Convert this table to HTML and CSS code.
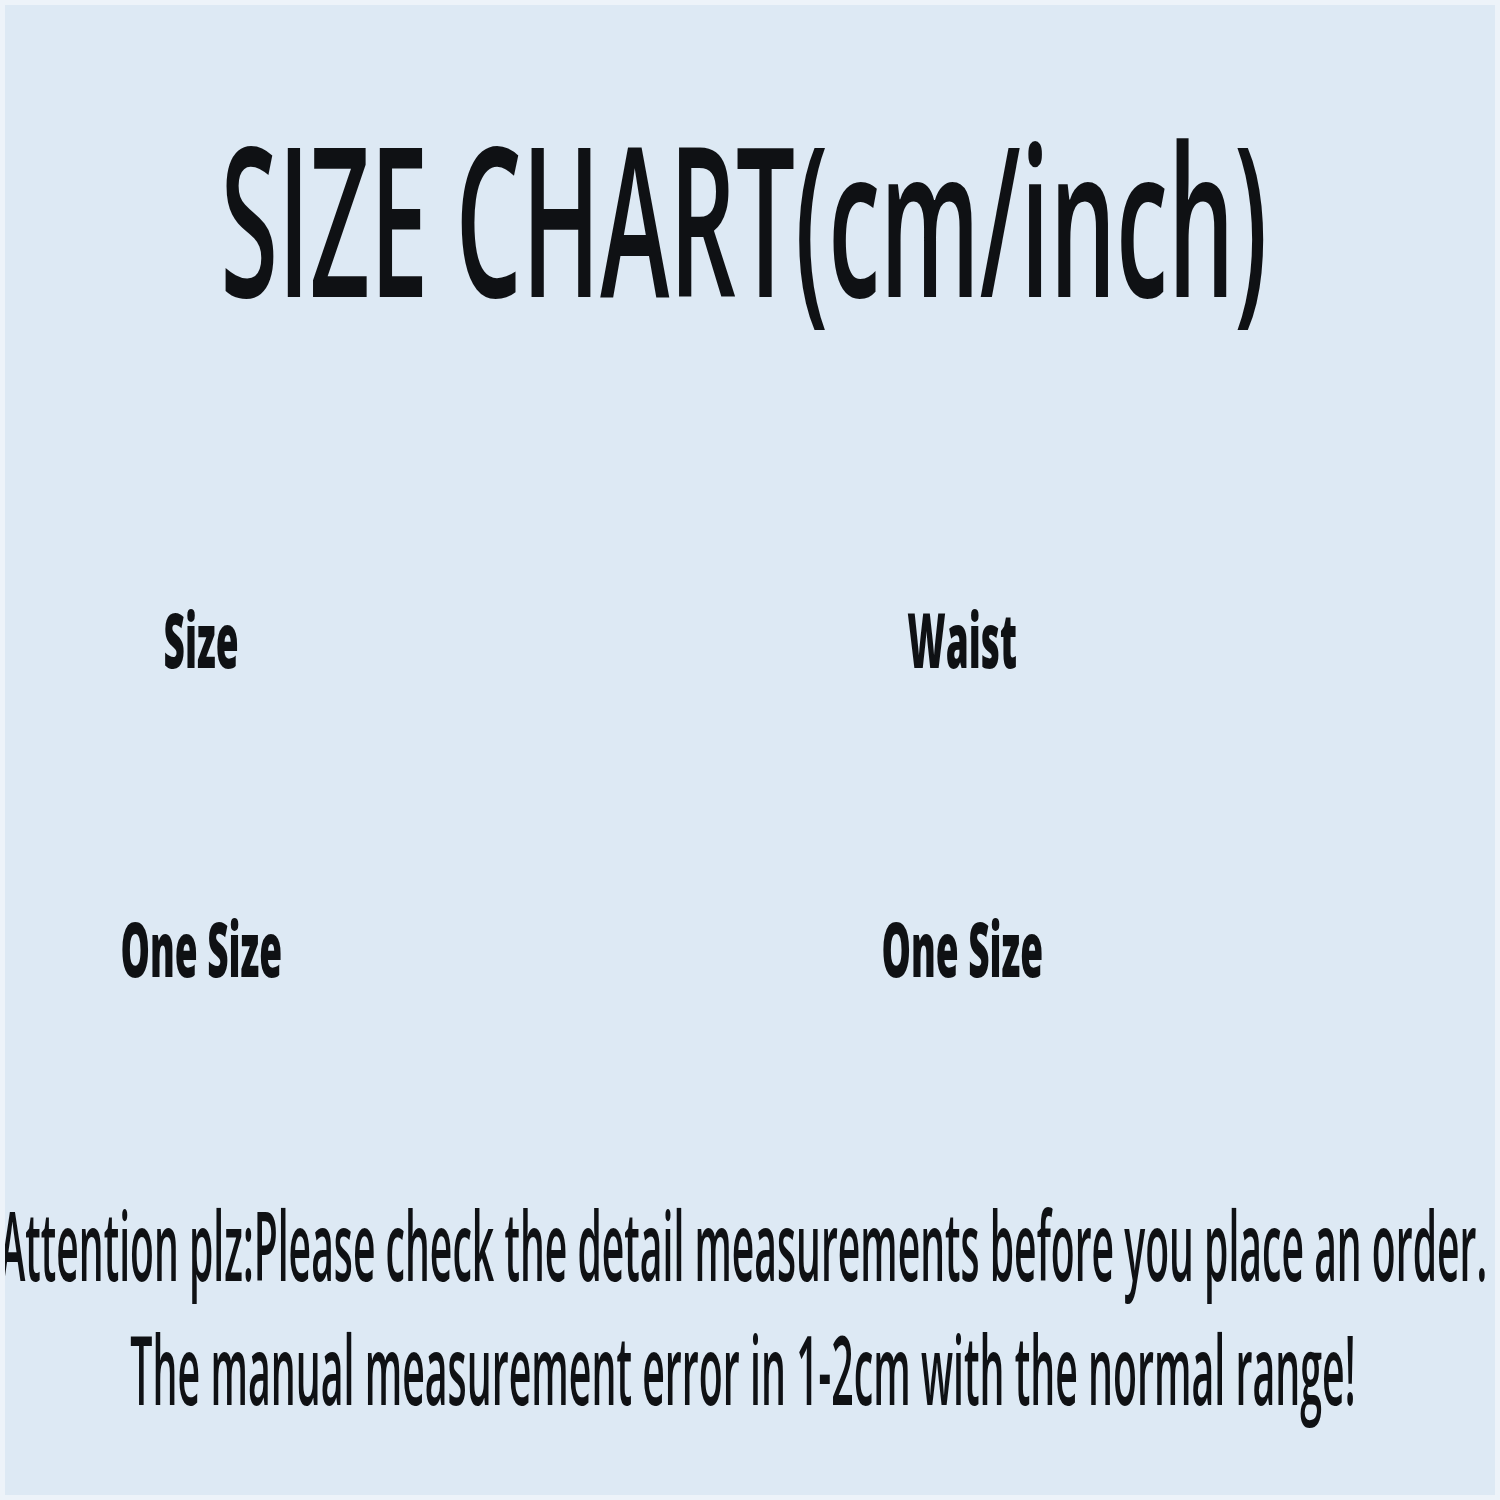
FILE: index.html
```html
<!DOCTYPE html>
<html lang="en">
<head>
<meta charset="utf-8">
<title>Size Chart</title>
<link rel="stylesheet" href="styles.css">
</head>
<body>
<main class="page">
  <header class="title-row">
    <h1 class="title"><span class="squeeze squeeze-title">SIZE CHART(cm/inch)</span></h1>
  </header>
  <section class="chart">
    <div class="cell head"><span class="squeeze squeeze-cell">Size</span></div>
    <div class="cell head"><span class="squeeze squeeze-cell">Waist</span></div>
    <div class="cell value"><span class="squeeze squeeze-cell">One Size</span></div>
    <div class="cell value"><span class="squeeze squeeze-cell">One Size</span></div>
  </section>
  <footer class="notes">
    <p class="note"><span class="squeeze squeeze-note1">Attention plz:Please check the detail measurements before you place an order.</span></p>
    <p class="note"><span class="squeeze squeeze-note2">The manual measurement error in 1-2cm with the normal range!</span></p>
  </footer>
</main>
</body>
</html>
```

FILE: styles.css
```css
html, body {
  margin: 0;
  padding: 0;
  background: #dde9f4;
}

.page {
  box-sizing: border-box;
  width: 1500px;
  height: 1500px;
  border: 5px solid #edf3f9;
  background: #dde9f4;
  overflow: hidden;
  color: #0f1114;
  font-family: "Open Sans", "Noto Sans", sans-serif;
}

.squeeze {
  display: inline-block;
  white-space: nowrap;
  transform-origin: 50% 50%;
  flex: none;
}

.title-row {
  margin-top: 107px;
  display: flex;
  justify-content: center;
  padding-right: 12px;
}

.title {
  margin: 0;
  display: flex;
  justify-content: center;
  font-size: 209px;
  line-height: 209px;
  font-weight: 600;
  width: 100%;
}

.squeeze-title {
  transform: scaleX(0.5);
}

.chart {
  margin-top: 279px;
  display: grid;
  grid-template-columns: 392px 402px;
  column-gap: 364px;
  row-gap: 232px;
}

.cell {
  display: flex;
  justify-content: center;
  font-size: 77px;
  line-height: 77px;
  font-weight: 800;
}

.squeeze-cell {
  transform: scaleX(0.48);
}

.notes {
  margin-top: 196px;
}

.note {
  margin: 0;
  display: flex;
  justify-content: center;
  padding-right: 14px;
  font-size: 96px;
  line-height: 124px;
  font-weight: 600;
}

.squeeze-note1 {
  transform: scaleX(0.4075);
}

.squeeze-note2 {
  transform: scaleX(0.4095);
}
```
